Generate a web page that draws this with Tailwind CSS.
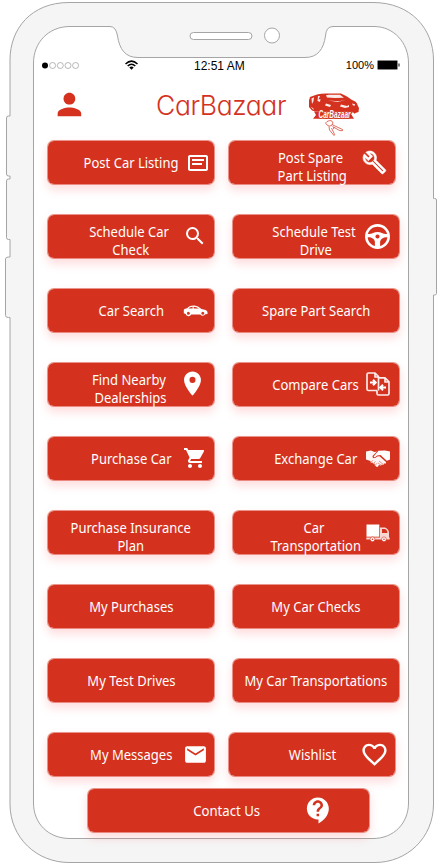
<!DOCTYPE html>
<html lang="en">
<head>
<meta charset="utf-8">
<title>CarBazaar</title>
<script src="https://cdn.jsdelivr.net/npm/@tailwindcss/browser@4"></script>
</head>
<body class="bg-white">
<div class="relative w-[442px] h-[866px] overflow-hidden">
  <!-- Phone frame -->
  <svg class="absolute inset-0" width="442" height="866" viewBox="0 0 442 866" fill="none" stroke="#a5a5a5" stroke-width="1">
    <path fill="#f5f5f5" d="M69 2.500H373C411 2.500 433.500 29 433.500 60V198.500H434.500Q436.500 198.500 436.500 200V293.500Q436.500 295 434.500 295H433.500V804C433.500 838 407 862.500 375 862.500H69C37 862.500 10 838 10 804V317.500H8.500Q5.500 317.500 5.500 315.500V259Q5.500 257 8.500 257H10V239.500H8.500Q6.500 239.500 6.500 237.500V181Q6.500 179 8.500 179H10V176H8.500Q6.500 176 6.500 174V118Q6.500 116 8.500 116H10V60C10 29 31 2.500 69 2.500Z"/>
    <path fill="#fff" d="M70 26.500H110Q116 26.500 117.500 36C119.500 49 125 57.500 138 57.500H305C318 57.500 323.500 49 325.500 36Q326 26.500 333 26.500H374C394 26.500 408.500 43 408.500 63V803C408.500 823 394 838.500 373 838.500H70C48 838.500 33.500 823 33.500 803V63C33.500 43 48 26.500 70 26.500Z"/>
    <rect x="190" y="32.500" width="62" height="7" rx="3.500" fill="#fff"/>
    <circle cx="272" cy="35.500" r="7.500" fill="#fff"/>
  </svg>

  <svg width="0" height="0" class="absolute">
    <symbol id="list" viewBox="0 0 24 24"><path d="M20 4H4c-1.100 0-2 .9-2 2v12c0 1.100.9 2 2 2h16c1.100 0 2-.9 2-2V6c0-1.100-.9-2-2-2zm0 14H4V6h16v12zM6 8h12v2H6zm0 4h10v2H6z"/></symbol>
    <symbol id="wrench" viewBox="0 0 24 24"><path stroke="#fff" stroke-width=".5" d="M22.610 18.990l-9.080-9.080c.93-2.340.45-5.100-1.440-7C9.790.61 6.210.4 3.660 2.260L7.500 6.110 6.080 7.520 2.250 3.690C.39 6.230.6 9.820 2.900 12.110c1.860 1.860 4.570 2.350 6.890 1.480l9.110 9.110c.39.39 1.020.39 1.410 0l2.300-2.300c.4-.38.4-1.010 0-1.410zm-3 1.600l-9.460-9.460c-.61.45-1.290.72-2 .82-1.360.2-2.790-.21-3.830-1.250C3.370 9.760 2.930 8.500 3 7.260l3.090 3.090 4.240-4.240-3.090-3.090c1.240-.07 2.490.37 3.440 1.310 1.080 1.080 1.490 2.570 1.240 3.960-.12.71-.42 1.370-.88 1.960l9.450 9.450-.88.89z"/></symbol>
    <symbol id="search" viewBox="0 0 24 24"><path d="M15.500 14h-.79l-.28-.27A6.470 6.470 0 0 0 16 9.500 6.500 6.500 0 1 0 9.500 16c1.610 0 3.090-.59 4.230-1.570l.27.28v.79l5 4.990L20.490 19l-4.990-5zm-6 0C7.010 14 5 11.990 5 9.500S7.010 5 9.500 5 14 7.010 14 9.500 11.990 14 9.500 14z"/></symbol>
    <symbol id="wheel" viewBox="0 0 24 24"><path fill-rule="evenodd" d="M12 0a12 12 0 1 0 0 24 12 12 0 0 0 0-24zM2.800 9.500C3.900 5.300 7.700 2.600 12 2.600s8.100 2.700 9.200 6.900c-2 0-3.700-.3-4.900-.9C15 7.900 13.600 7.600 12 7.600S9 7.900 7.700 8.600C6.500 9.200 4.800 9.500 2.800 9.500zM2.600 12.800c3.400-.3 6.400 1.300 6.900 4.200v4.100c-3.900-1-6.700-4.300-6.900-8.300zM14.500 21.100V17c.5-2.900 3.500-4.500 6.900-4.200-.2 4-3 7.300-6.900 8.300zM12 10a2 2 0 1 1 0 4 2 2 0 0 1 0-4z"/></symbol>
    <symbol id="car" viewBox="0 0 24 12"><path fill-rule="evenodd" d="M.3 5 1 4l2.500-.8L6 1.300Q8 .4 11 .5 14.500.6 18 4l4 1q2 .8 2 2.300V9l-2.200.3a2.900 2.900 0 0 1-5 .2H7.700A2.900 2.900 0 0 1 2.200 9L.3 8.300zM4.800 3.600h4.300V1.700Q6.500 1.800 4.800 3.600zM10.200 3.600h5.300Q13 1.800 10.200 1.700zM4.900 6.700a1.500 1.500 0 1 0 0 3 1.500 1.500 0 0 0 0-3zm14.400 0a1.500 1.500 0 1 0 0 3 1.500 1.500 0 0 0 0-3z"/></symbol>
    <symbol id="pin" viewBox="0 0 24 24"><path d="M12 2C8.130 2 5 5.130 5 9c0 5.250 7 13 7 13s7-7.750 7-13c0-3.870-3.130-7-7-7zm0 9.500a2.500 2.500 0 0 1 0-5 2.500 2.500 0 0 1 0 5z"/></symbol>
    <symbol id="compare" viewBox="0 0 24 24"><path fill="none" stroke="#fff" stroke-opacity=".9" stroke-width="1.700" stroke-linejoin="round" d="M11 18.500H2.500Q1 18.500 1 17V2.500Q1 1 2.500 1H9l3.500 3.500v14M9 1v4h3.500M12.500 5.800H19l4 4V21.500Q23 23 21.500 23H12.500Q11 23 11 21.500V18.500M19 6v4h4"/><path fill="none" stroke="#fff" stroke-width="2" d="M4 10.500h5M7 7.800l2.700 2.700L7 13.200M20 15.500h-5M17 12.800l-2.700 2.700 2.700 2.700"/></symbol>
    <symbol id="cart" viewBox="0 0 24 24"><path d="M7 18c-1.100 0-1.990.9-1.990 2S5.900 22 7 22s2-.9 2-2-.9-2-2-2zM1 2v2h2l3.600 7.590-1.350 2.450c-.16.28-.25.61-.25.96 0 1.100.9 2 2 2h12v-2H7.420c-.14 0-.25-.11-.25-.25l.03-.12.900-1.630h7.450c.75 0 1.410-.41 1.750-1.030l3.580-6.490A1 1 0 0 0 20 4H5.210l-.94-2H1zm16 16c-1.100 0-1.990.9-1.990 2s.89 2 1.990 2 2-.9 2-2-.9-2-2-2z"/></symbol>
    <symbol id="shake" viewBox="0 0 24 18"><path d="M0 1.500 5 .5 8.500 2 11 1.500 6.500 6q-.3 2 1.500 2.300 1.500 0 3.200-1.700l2.300-.3 6.500 5.700q.5 1.500-1 1.700l-1-.4q.2 1.700-1.400 1.500l-.9-.4q-.2 1.400-1.700 1l-1-.6Q12 17.500 10.800 17L8.500 15 9 13.600 7 14l-.3-1.500-2 .2L4.500 11 0 9.500z" opacity=".95"/><path d="M12.500.8 19 .5l5 1v8l-3.200 1.300L14.500 5 11 5.500 9 7.200Q7.500 7.500 7.800 6.300z"/><path fill="none" stroke="#d4321e" stroke-width=".5" d="M4.700 12.500 7 10.200M6.800 14l2.700-2.500M8.800 15.600l2.300-2.400M13 11l4 3.200M11.800 12.700l3.300 2.600"/></symbol>
    <symbol id="truck" viewBox="0 0 24 18"><path d="M.5.500h12.800v12.200H.5z"/><path fill-rule="evenodd" opacity=".8" d="M14 3.500h5Q23 5 23 9v4l.7 1v1.500H.3v-2H14zM16 5v4h5.500Q21 5.500 19 5z"/><circle cx="6.500" cy="15.300" r="2.400" stroke="#d4321e" stroke-width=".6"/><circle cx="18" cy="15.300" r="2.400" stroke="#d4321e" stroke-width=".6"/><circle cx="6.500" cy="15.300" r=".8" fill="#d4321e"/><circle cx="18" cy="15.300" r=".8" fill="#d4321e"/></symbol>
    <symbol id="mail" viewBox="0 0 24 24"><path d="M20 4H4c-1.100 0-1.990.9-1.990 2L2 18c0 1.100.9 2 2 2h16c1.100 0 2-.9 2-2V6c0-1.100-.9-2-2-2zm0 4l-8 5-8-5V6l8 5 8-5v2z"/></symbol>
    <symbol id="heart" viewBox="0 0 24 24"><path d="M16.500 3c-1.740 0-3.410.81-4.500 2.090C10.910 3.810 9.240 3 7.500 3 4.420 3 2 5.420 2 8.500c0 3.780 3.400 6.860 8.550 11.540L12 21.350l1.450-1.320C18.600 15.360 22 12.280 22 8.500 22 5.420 19.580 3 16.500 3zm-4.400 15.550l-.1.100-.1-.1C7.140 14.240 4 11.390 4 8.500 4 6.500 5.500 5 7.500 5c1.540 0 3.040.99 3.570 2.360h1.870C13.460 5.990 14.960 5 16.500 5c2 0 3.500 1.500 3.500 3.500 0 2.890-3.140 5.740-7.900 10.050z"/></symbol>
    <symbol id="help" viewBox="0 0 24 24"><path d="M11.500 2C6.810 2 3 5.810 3 10.500S6.810 19 11.500 19h.5v3c4.860-2.340 8-7 8-11.500C20 5.810 16.190 2 11.500 2zm1 14.500h-2v-2h2v2zm0-3.500h-2c0-3.250 3-3 3-5 0-1.100-.9-2-2-2s-2 .9-2 2h-2c0-2.210 1.790-4 4-4s4 1.790 4 4c0 2.500-3 2.750-3 5z"/></symbol>
  </svg>

  <main class="relative flex flex-col h-full pt-[57px]">
    <!-- Status bar -->
    <div class="flex items-center h-4 pl-[42px] pr-[42px] text-black text-xs leading-4 font-['Liberation_Sans',sans-serif]">
      <svg width="38" height="8" viewBox="0 0 38 8" fill="none" stroke="#999" stroke-width=".7"><circle cx="3" cy="4.500" r="3" fill="#000" stroke="none"/><circle cx="10.600" cy="4.500" r="3"/><circle cx="18.300" cy="4.500" r="3"/><circle cx="26" cy="4.500" r="3"/><circle cx="33.600" cy="4.500" r="3"/></svg>
      <svg class="ml-[45px] -mt-px" width="13" height="10" viewBox="0 0 13 10" fill="none" stroke="#000" stroke-width="1.500"><path d="M.5 4Q6.500-1.800 12.500 4M2.700 6Q6.500 2.400 10.300 6"/><path d="M4.300 7.500Q6.500 5.500 8.700 7.500L6.500 9.800z" fill="#000" stroke="none"/></svg>
      <span class="ml-14 mt-0.5">12:51 AM</span>
      <span class="ml-auto text-[11px]">100%</span>
      <svg class="ml-[3px]" width="23" height="10" viewBox="0 0 23 10"><rect x=".5" y=".5" width="20" height="9" rx="1" fill="#000" stroke="#888"/><path d="M21.500 3.500h1v3h-1z"/></svg>
    </div>

    <!-- Header -->
    <header class="flex items-start h-[67px] pl-[53px] text-[#d4321e]">
      <svg class="mt-[15px]" width="33" height="33" viewBox="0 0 24 24" fill="currentColor"><path d="M12 12c2.210 0 4-1.790 4-4s-1.790-4-4-4-4 1.790-4 4 1.790 4 4 4zm0 2c-2.670 0-8 1.340-8 4v2h16v-2c0-2.660-5.330-4-8-4z" transform="translate(-.9 -.8) scale(1.070)"/></svg>
      <h1 class="ml-[70px] mt-4 w-[132px] whitespace-nowrap text-[26.500px] leading-8 font-light tracking-[-0.400px] font-['Inter',sans-serif] [font-feature-settings:'cv11']">CarBazaar</h1>
      <svg class="ml-5 mt-[19.500px] overflow-visible" width="54" height="46" viewBox="0 0 54 46" fill="currentColor">
        <path d="M1 7.500 2 4 9 1.500Q14 .2 20 .5h13l6 3 5 3.500q5 1.500 5.500 5l1.500 3-.5 4-3 1-1 .8-2-2-37-.2-3.500-1L1 14z"/>
        <path d="M6 18.500h39.500L43 21l3 4.800H5L8 22z"/>
        <path fill="#fff" d="M18 2.300 21 1.700h11l4 3-9 .3-8-.5zM3.500 5.500 6 4.300 5.500 8 4 11zM10 3h2L10.500 6.500l2-.5-.5 3-2.500-1zM2.500 13.500l3 2v1.500zM18 10.500l5 1.500-1 2-5-1.500zM33 11.500l6 1.500 2-1v2l-4 1-5-1.500zM44 10.500l3 .7v1.300h-2zM20 7.500l11 .7 7-1.500-8 2.300z" opacity=".9"/>
        <text x="10.500" y="24.800" fill="#fff" stroke="#d4321e" stroke-width="1.500" paint-order="stroke" font-family="Liberation Sans" font-size="10.500" font-weight="700" font-style="italic" textLength="32" lengthAdjust="spacingAndGlyphs">CarBazaar</text>
        <g fill="none" stroke="#d4321e" stroke-width=".7"><path d="M19 28.500Q24 26 25 30L23.500 32.500Q21 34 19 32L17.500 30zM24 31.500l3 1.500 7.500 3.500v1.200l-3-.2-7-4M21 33.500l.5 3.500 4.500 5.500.7-.8L23.500 35M26 34l-.5 2"/></g>
      </svg>
    </header>

    <!-- Actions -->
    <section class="flex flex-col gap-[29px] pl-[47px] text-white text-[14px] leading-[18px] text-center font-['Noto_Sans',sans-serif] [&_a]:relative [&_a]:flex [&_a]:h-[45px] [&_a]:w-[168px] [&_a]:shrink-0 [&_a]:items-center [&_a]:justify-center [&_a]:rounded-[7px] [&_a]:border [&_a]:border-[#d4321e]/50 [&_a]:bg-clip-padding [&_a]:bg-[#d4321e] [&_a]:shadow-[0_5px_10px_rgba(255,80,90,0.2)] [&_span]:whitespace-nowrap [&_span]:scale-x-[.93] [&_svg]:absolute [&_svg]:fill-white">
      <div class="flex gap-[13px]">
        <a href="#"><span class="pt-px">Post Car Listing</span><svg class="left-[138px] top-[10px]" width="24" height="24"><use href="#list"/></svg></a>
        <a href="#"><span class="pt-[9px]">Post Spare&nbsp;<br>Part Listing</span><svg class="left-[133px] top-[9px]" width="25" height="25"><use href="#wrench"/></svg></a>
      </div>
      <div class="flex gap-[17px]">
        <a href="#"><span class="pt-[9px]">Schedule Car&nbsp;<br>Check</span><svg class="left-[135px] top-[9px]" width="24" height="24"><use href="#search"/></svg></a>
        <a href="#"><span class="pt-[9px]">Schedule Test&nbsp;<br>Drive</span><svg class="left-[132px] top-[9px]" width="25" height="25"><use href="#wheel"/></svg></a>
      </div>
      <div class="flex gap-[17px]">
        <a href="#"><span class="pt-px">Car Search</span><svg class="left-[134.500px] top-[15.500px]" width="25" height="12"><use href="#car"/></svg></a>
        <a href="#"><span class="pt-px">Spare Part Search</span></a>
      </div>
      <div class="flex gap-[17px]">
        <a href="#"><span class="pt-[9px]">Find Nearby&nbsp;<br>Dealerships</span><svg class="left-[129.500px] top-[6px]" width="29" height="29"><use href="#pin"/></svg></a>
        <a href="#"><span class="pt-px">Compare Cars</span><svg class="left-[132.500px] top-[8.500px]" width="24" height="24"><use href="#compare"/></svg></a>
      </div>
      <div class="flex gap-[17px]">
        <a href="#"><span class="pt-px">Purchase Car</span><svg class="left-[135px] top-[9px]" width="24" height="24"><use href="#cart"/></svg></a>
        <a href="#"><span class="pt-px">Exchange Car</span><svg class="left-[132.500px] top-[12.500px]" width="24" height="18"><use href="#shake"/></svg></a>
      </div>
      <div class="flex gap-[17px]">
        <a href="#"><span class="pt-[9px]">Purchase Insurance<br>Plan</span></a>
        <a href="#"><span class="pt-[9px]">Car&nbsp;<br>Transportation</span><svg class="left-[132.500px] top-[13px]" width="24" height="18"><use href="#truck"/></svg></a>
      </div>
      <div class="flex gap-[17px]"><a href="#"><span class="pt-px">My Purchases</span></a><a href="#"><span class="pt-px">My Car Checks</span></a></div>
      <div class="flex gap-[17px]"><a href="#"><span class="pt-px">My Test Drives</span></a><a href="#"><span class="pt-px">My Car Transportations</span></a></div>
      <div class="flex gap-[13px]">
        <a href="#"><span class="pt-px">My Messages</span><svg class="left-[135px] top-[9px]" width="25" height="25"><use href="#mail"/></svg></a>
        <a href="#"><span class="pt-px">Wishlist</span><svg class="left-[131px] top-[6.500px]" width="29" height="29"><use href="#heart"/></svg></a>
      </div>
    </section>
    <a href="#" class="relative mt-[11px] ml-[87px] flex h-[45px] w-[283px] shrink-0 items-center justify-center rounded-[7px] border border-[#d4321e]/50 bg-clip-padding bg-[#d4321e] text-white text-[14px] leading-[18px] font-['Noto_Sans',sans-serif] shadow-[0_5px_10px_rgba(255,80,90,0.2)]">
      <span class="pt-px scale-x-[.94] -translate-x-0.5">Contact Us</span>
      <svg class="absolute left-[215px] top-[5.500px] fill-white" width="31" height="31"><use href="#help"/></svg>
    </a>
  </main>
</div>
</body>
</html>
